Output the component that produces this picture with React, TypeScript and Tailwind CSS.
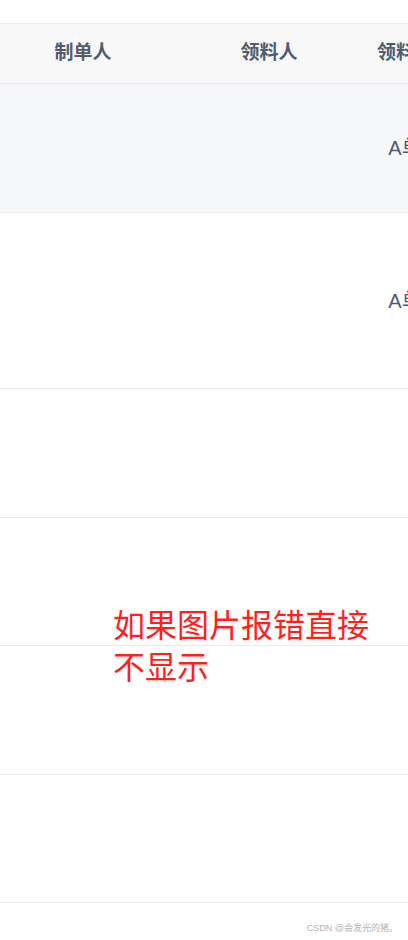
import React from "react";

type Row = {
  maker: string;
  receiver: string;
  unit: string;
  height: string;
  bg: string;
};

const rows: Row[] = [
  { maker: "", receiver: "", unit: "A单位", height: "h-[129px]", bg: "bg-[#f5f7fa]" },
  { maker: "", receiver: "", unit: "A单位", height: "h-[176px]", bg: "bg-white" },
  { maker: "", receiver: "", unit: "", height: "h-[129px]", bg: "bg-white" },
  { maker: "", receiver: "", unit: "", height: "h-[128px]", bg: "bg-white" },
  { maker: "", receiver: "", unit: "", height: "h-[129px]", bg: "bg-white" },
  { maker: "", receiver: "", unit: "", height: "h-[128px]", bg: "bg-white" },
];

const font = "font-['Liberation_Sans','Noto_Sans_CJK_SC',sans-serif]";

export default function App() {
  return (
    <div className={`relative w-[408px] h-[940px] overflow-hidden bg-white ${font}`}>
      <div className="h-[23px]" />

      <div className="w-[520px]">
        {/* header */}
        <div className="flex h-[61px] items-center bg-[#f8f8f9] border-y border-[#e8eaec] text-[19px] font-bold text-[#515a6e]">
          <div className="w-[166px] text-center">制单人</div>
          <div className="w-[206px] text-center">领料人</div>
          <div className="w-[86px] text-center whitespace-nowrap">领料单位</div>
        </div>

        {rows.map((row, i) => (
          <div
            key={i}
            className={`flex items-center border-b border-[#e8eaec] ${row.height} ${row.bg} text-[20px] text-[#515a6e]`}
          >
            <div className="w-[166px] text-center">{row.maker}</div>
            <div className="w-[206px] text-center">{row.receiver}</div>
            <div className="w-[86px] text-center whitespace-nowrap">{row.unit}</div>
          </div>
        ))}
      </div>

      {/* overlay note */}
      <div className="absolute left-[113px] top-[602px] w-[266px] text-[32px] leading-[42px] text-[#ff1f1f] font-['Noto_Sans_CJK_SC',sans-serif]">
        如果图片报错直接不显示
      </div>

      <div className="absolute right-[10px] top-[922px] text-[9px] text-[#b5b5b5]">
        CSDN @会发光的猪。
      </div>
    </div>
  );
}
